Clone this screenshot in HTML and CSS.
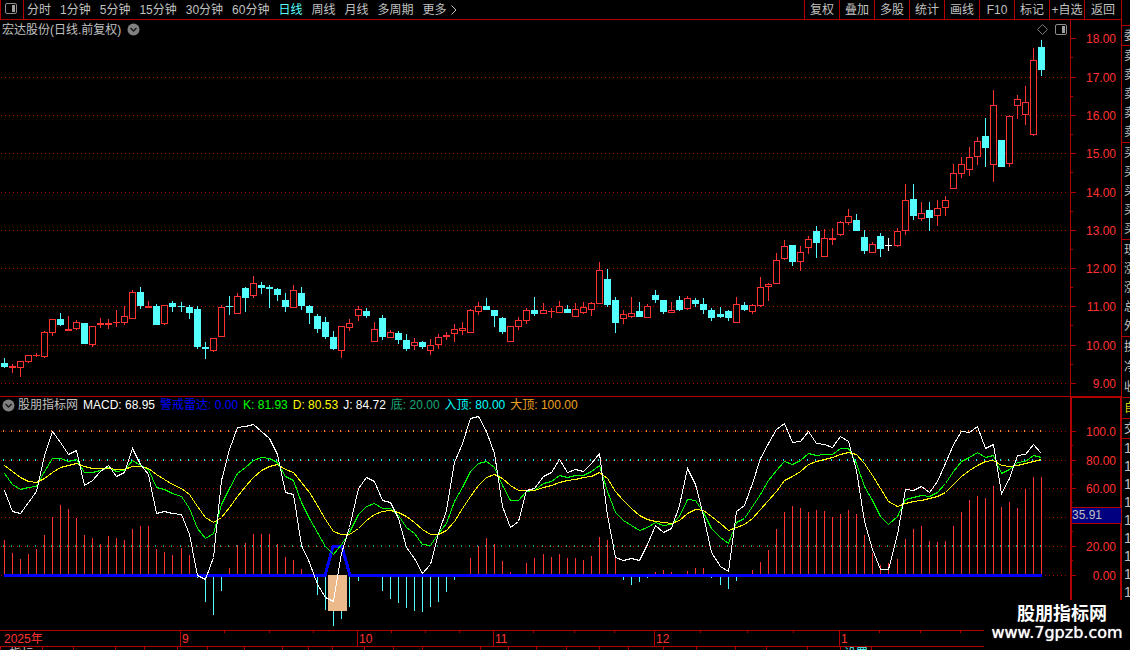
FILE: index.html
```html
<!doctype html>
<html lang="zh-CN">
    <head>
        <meta charset="UTF-8" />
        <meta name="viewport" content="width=device-width, initial-scale=1.0" />
        <title>宏达股份 - 日线</title>
        <link rel="stylesheet" href="styles.css">
    </head>
    <body>
        <div class="terminal">
            <main class="main">
                <nav class="toolbar">
                    <button class="panel-toggle" aria-label="侧栏">
                        <svg width="14" height="12" viewBox="0 0 14 12">
                            <rect x="0.5" y="0.5" width="11" height="10" rx="1.5" fill="none" stroke="#8c8c8c" />
                            <rect x="7" y="2" width="3" height="7" fill="#a0a0a0" />
                        </svg>
                    </button>
                    <div class="periods">
                        <button>分时</button>
                        <button>1分钟</button>
                        <button>5分钟</button>
                        <button>15分钟</button>
                        <button>30分钟</button>
                        <button>60分钟</button>
                        <button class="active">日线</button>
                        <button>周线</button>
                        <button>月线</button>
                        <button>多周期</button>
                        <button class="more">更多
                            <svg width="6" height="10" viewBox="0 0 6 10">
                                <path d="M0.5 0.5 L5 5 L0.5 9.5" fill="none" stroke="#c0c0c0" />
                            </svg>
                        </button>
                    </div>
                    <div class="tools">
                        <button>复权</button>
                        <button>叠加</button>
                        <button>多股</button>
                        <button>统计</button>
                        <button>画线</button>
                        <button>F10</button>
                        <button>标记</button>
                        <button>+自选</button>
                        <button>返回</button>
                    </div>
                </nav>

                <div class="workspace">
                    <div class="charts">
                        <section class="price">
                            <header class="price-title">
                                <span>宏达股份(日线.前复权)</span>
                                <button class="round" aria-label="展开">
                                    <svg width="13" height="13" viewBox="0 0 13 13">
                                        <circle cx="6.5" cy="6.5" r="6" fill="#808080" />
                                        <path d="M3.5 5 L6.5 8 L9.5 5" fill="none" stroke="#1a1a1a" stroke-width="1.5" />
                                    </svg>
                                </button>
                                <div class="corner">
                                    <svg width="11" height="11" viewBox="0 0 11 11">
                                        <path d="M5.5 0.5 L10.5 5.5 L5.5 10.5 L0.5 5.5 Z" fill="none" stroke="#7a7a7a" />
                                    </svg>
                                    <svg width="13" height="12" viewBox="0 0 13 12">
                                        <rect x="0.5" y="0.5" width="11" height="10" rx="1.5" fill="none" stroke="#8c8c8c" />
                                        <rect x="7" y="2" width="3" height="7" fill="#a0a0a0" />
                                    </svg>
                                </div>
                            </header>
                            <svg id="priceChart" class="plot plot-price" viewBox="0 39 1070 357" preserveAspectRatio="none"></svg>
                        </section>
                        <section class="indicator">
                            <header class="legend">
                                <button class="round" aria-label="指标菜单">
                                    <svg width="13" height="13" viewBox="0 0 13 13">
                                        <circle cx="6.5" cy="6.5" r="6" fill="#808080" />
                                        <path d="M3.5 5 L6.5 8 L9.5 5" fill="none" stroke="#1a1a1a" stroke-width="1.5" />
                                    </svg>
                                </button>
                                <span class="name">股朋指标网</span>
                                <span class="white">MACD: 68.95</span>
                                <span class="blue">警戒雷达: 0.00</span>
                                <span class="green">K: 81.93</span>
                                <span class="yellow">D: 80.53</span>
                                <span class="white">J: 84.72</span>
                                <span class="teal">底: 20.00</span>
                                <span class="cyan">入顶: 80.00</span>
                                <span class="orange">大顶: 100.00</span>
                            </header>
                            <svg id="kdjChart" class="plot plot-kdj" viewBox="0 414 1070 216" preserveAspectRatio="none"></svg>
                        </section>
                    </div>
                    <aside class="axes">
                        <svg id="priceAxis" class="axis" width="51" height="376" viewBox="1070 20 51 376"></svg>
                        <div class="kdj-axis">
                            <svg id="kdjAxis" class="axis" width="51" height="234" viewBox="1070 396 51 234"></svg>
                            <output class="cursor-value">35.91</output>
                        </div>
                    </aside>
                </div>

                <div class="dates">
                    <span>2025年</span>
                    <span>9</span>
                    <span>10</span>
                    <span>11</span>
                    <span>12</span>
                    <span>1</span>
                    <svg id="dateTicks" class="date-ticks" viewBox="0 0 1121 2" preserveAspectRatio="none"></svg>
                </div>
                <footer id="tabs" class="tabs"></footer>
            </main>

            <aside class="quote">
                <div class="q-head"></div>
                <div class="q-one"><span>委</span></div>
                <div class="q-five"><span>卖</span><span>卖</span><span>卖</span><span>卖</span><span>卖</span></div>
                <div class="q-five"><span>买</span><span>买</span><span>买</span><span>买</span><span>买</span></div>
                <div class="q-five"><span>现</span><span>涨</span><span>涨</span><span>总</span><span>外</span></div>
                <div class="q-three"><span>换</span><span>净</span><span>收</span></div>
                <div class="q-self"><span>自</span></div>
                <div class="q-one"><span>交</span></div>
                <div class="q-ticks"><span>1</span><span>1</span><span>1</span><span>1</span><span>1</span><span>1</span><span>1</span><span>1</span><span>1</span></div>
            </aside>
        </div>

        <div class="brand">
            <div class="brand-name">股朋指标网</div>
            <div class="brand-url">www.7gpzb.com</div>
        </div>
        <script src="chart.js"></script>
    </body>
</html>
```

FILE: styles.css
```css
body {
    background-color: black;
    margin: 0;
    height: 100vh;
    overflow: hidden;
    color: #c0c0c0;
    font-family: "Liberation Sans", "Noto Sans CJK SC", sans-serif;
    font-size: 12px;
    line-height: 16px;
}

button {
    padding: 0;
    border: none;
    background: none;
    color: inherit;
    font: inherit;
    white-space: nowrap;
    cursor: pointer;
}

svg {
    display: block;
}

.terminal {
    display: grid;
    grid-template-columns: minmax(0, 1fr) 9px;
}

/* top bar */
.toolbar {
    display: flex;
    height: 19px;
    border-bottom: 1px solid #b00000;
}

.panel-toggle {
    box-sizing: border-box;
    width: 24px;
    padding-left: 4px;
    padding-bottom: 2px;
    border-left: 1px solid #b00000;
    border-right: 1px solid #b00000;
}

.periods {
    display: flex;
    gap: 9px;
    padding-left: 3px;
    flex: 1;
}

.periods .active {
    color: #54ffff;
}

.more {
    display: flex;
    align-items: center;
    gap: 4px;
}

.tools {
    display: flex;
}

.tools button {
    box-sizing: border-box;
    width: 35px;
    border-left: 1px solid #b00000;
}

.tools button:last-child {
    width: 37px;
}

button:hover {
    color: white;
}

/* charts */
.workspace {
    display: grid;
    grid-template-columns: minmax(0, 1fr) 51px;
}

.plot {
    width: 100%;
    shape-rendering: crispEdges;
}

.plot-price {
    height: 357px;
}

.plot-kdj {
    height: 216px;
}

.price-title {
    display: flex;
    align-items: center;
    gap: 6px;
    height: 19px;
    padding-left: 2px;
}

.corner {
    display: flex;
    align-items: center;
    gap: 7px;
    margin-left: auto;
    padding-right: 2px;
}

.indicator {
    border-top: 1px solid #b00000;
}

.legend {
    display: flex;
    align-items: center;
    gap: 5px;
    height: 16px;
    padding-left: 2px;
    padding-bottom: 1px;
    white-space: nowrap;
}

.legend .name {
    margin-left: -2px;
}

.white {
    color: white;
}

.blue {
    color: #0000ff;
}

.green {
    color: #00ff00;
}

.yellow {
    color: #ffff00;
}

.teal {
    color: #18a878;
}

.cyan {
    color: #00ffff;
}

.orange {
    color: #f0a020;
}

.axis {
    shape-rendering: crispEdges;
    font-size: 12px;
    fill: #ff3232;
}

.kdj-axis {
    position: relative;
}

.cursor-value {
    position: absolute;
    top: 111px;
    left: 2px;
    right: 0;
    height: 15px;
    line-height: 15px;
    border-top: 1px solid #b00000;
    border-bottom: 1px solid #b00000;
    background-color: #000080;
}

/* dates */
.dates {
    position: relative;
    display: grid;
    grid-template-columns: 180fr 177fr 136fr 161fr 185fr 282fr;
    height: 15px;
    border-top: 1px solid #b00000;
    border-bottom: 1px solid #b00000;
    color: #ff3232;
}

.dates span {
    padding-left: 1px;
    border-left: 1px solid #b00000;
}

.dates span:first-child {
    padding-left: 4px;
    border-left: none;
}

.date-ticks {
    position: absolute;
    top: 0;
    left: 0;
    width: 100%;
    height: 2px;
}

.tabs {
    display: flex;
    height: 14px;
    line-height: 14px;
}

.tabs button {
    box-sizing: border-box;
    border-left: 1px solid #b00000;
}

.tabs .on {
    color: #54ffff;
}

/* quote column, mostly off screen */
.quote {
    overflow: hidden;
    border-left: 1px solid #b00000;
}

.quote div {
    display: flex;
    flex-direction: column;
    justify-content: space-around;
    box-sizing: border-box;
    padding-left: 2px;
    border-bottom: 1px solid #b00000;
}

.quote span {
    width: 14px;
}

.quote .q-head {
    height: 26px;
}

.quote .q-one {
    height: 20px;
}

.quote .q-five {
    height: 97px;
}

.quote .q-three {
    height: 61px;
}

.quote .q-self {
    height: 21px;
    color: #d0d000;
}

.quote .q-ticks {
    height: 162px;
    border-bottom: none;
    font-size: 14px;
}

/* site mark */
.brand {
    position: absolute;
    top: 600px;
    right: 0;
    width: 146px;
    height: 50px;
    background-color: black;
    color: white;
    text-align: center;
}

.brand-name {
    padding-left: 10px;
    font-size: 18px;
    font-weight: bold;
    line-height: 28px;
}

.brand-url {
    font-family: "DejaVu Sans", sans-serif;
    font-size: 16px;
    line-height: 10px;
    text-shadow: 0 0 1px white;
}
```

FILE: chart.js
```js
// one candle per entry: kind high top bottom low (rows)
// d = down, u = up, f = flat
const candles = `
d 358 363 366 367|u 364 366 367 372|u 361 361 367 376|u 355 355 361 362|u 353 355 355 356
u 331 332 356 357|u 319 319 332 335|d 313 319 324 325|u 316 329 330 330|u 320 322 328 329
d 323 323 343 343|u 326 326 344 346|u 318 323 324 327|u 319 323 324 328|u 310 322 322 326
u 306 316 322 324|u 290 292 318 318|d 287 292 305 308|u 301 306 307 307|d 304 306 324 324
u 305 305 323 324|d 301 303 306 311|d 302 306 306 311|d 305 307 312 318|d 306 309 346 348
d 342 347 348 358|u 338 338 350 351|u 305 307 336 336|d 296 306 306 314|u 293 296 313 313
d 287 288 297 311|u 276 283 295 297|d 282 285 287 293|d 285 287 288 307|d 288 289 294 300
d 293 300 306 311|u 285 290 307 307|d 287 293 305 309|d 305 306 312 323|d 314 316 328 332
d 317 322 336 338|d 331 337 348 349|u 326 326 350 357|u 319 323 327 330|u 306 309 315 320
d 308 311 315 317|u 322 329 341 341|d 315 318 336 339|u 330 332 337 337|d 331 333 339 343
d 334 340 348 350|u 338 342 345 349|d 341 342 346 348|u 339 345 350 354|u 334 337 344 348
u 332 335 336 339|u 324 329 333 341|u 322 328 330 334|u 309 310 332 332|u 302 306 311 314
d 298 306 309 309|d 310 310 315 326|d 317 318 331 333|u 326 326 341 341|u 317 320 326 329
u 308 310 320 323|d 297 310 313 315|u 303 310 313 313|u 308 311 311 317|u 301 306 312 312
d 305 309 312 312|u 303 309 316 316|u 302 307 312 313|u 302 303 309 315|u 262 270 303 303
d 269 279 304 306|d 297 300 322 332|u 310 314 318 323|u 297 313 316 317|d 302 311 316 316
u 304 306 317 317|d 290 295 299 302|d 300 300 311 313|u 302 310 312 312|d 296 300 309 310
u 296 298 308 309|d 298 300 303 306|d 298 304 309 313|d 308 310 317 320|d 307 314 316 317
d 310 311 317 320|u 297 304 322 322|d 302 305 309 310|u 304 305 311 313|u 277 287 305 306
u 283 284 286 300|u 253 260 283 283|u 240 246 258 259|d 245 245 261 265|u 246 252 261 270
u 236 239 247 253|d 226 231 242 257|u 229 238 256 256|u 228 238 239 244|u 221 222 234 235
u 209 216 222 224|d 214 220 230 230|d 230 237 250 253|u 242 244 252 252|d 233 236 248 256
f 238 245 245 250|u 228 231 245 246|u 184 200 230 234|d 184 199 215 219|u 202 213 218 220
d 202 210 217 230|u 200 208 215 225|u 196 200 207 215|u 164 173 188 188|u 157 164 173 177
u 147 157 169 175|u 137 141 156 164|d 118 136 147 166|u 90 105 164 181|d 140 140 166 166
u 115 116 163 166|u 95 99 105 118|u 86 102 114 124|u 48 60 134 135|d 40 47 69 75`
    .trim().split(/[|\n]/).map((c) => c.split(" "));

// indicator series, three steps to a row, counted from row 395
const k = [
    234, 268, 283, 277, 272, 228, 190, 190, 199, 192, 232, 232, 224, 217, 229, 226, 196, 210, 222, 277,
    283, 294, 304, 339, 400, 430, 414, 326, 280, 234, 215, 195, 187, 188, 200, 244, 255, 320, 368, 412,
    452, 478, 447, 410, 357, 332, 323, 338, 338, 360, 395, 414, 448, 449, 415, 384, 318, 275, 228, 203,
    199, 215, 270, 314, 316, 287, 284, 265, 259, 239, 247, 241, 241, 228, 211, 288, 352, 376, 391, 406,
    397, 380, 391, 387, 362, 311, 316, 352, 400, 427, 443, 380, 369, 333, 296, 256, 226, 199, 208, 196,
    175, 181, 178, 178, 160, 160, 205, 272, 315, 363, 387, 362, 313, 307, 301, 304, 290, 263, 228, 199,
    187, 170, 187, 179, 234, 223, 201, 197, 181, 187,
];
const d = [
    211, 229, 247, 259, 262, 249, 230, 217, 211, 205, 214, 220, 220, 220, 223, 223, 214, 214, 218, 236,
    253, 267, 280, 298, 334, 365, 381, 366, 337, 303, 272, 247, 226, 213, 208, 222, 232, 262, 292, 330,
    372, 408, 418, 416, 398, 374, 357, 349, 346, 350, 362, 382, 403, 418, 418, 405, 378, 340, 302, 270,
    247, 238, 250, 271, 286, 286, 286, 277, 271, 260, 256, 253, 247, 242, 232, 250, 287, 316, 340, 360,
    372, 377, 382, 385, 376, 354, 343, 346, 363, 385, 406, 396, 388, 370, 343, 315, 287, 256, 242, 227,
    208, 199, 193, 187, 178, 172, 178, 204, 240, 280, 319, 333, 325, 319, 314, 310, 303, 290, 268, 243,
    226, 209, 199, 195, 209, 214, 210, 205, 198, 193,
];
const j = [
    286, 348, 355, 320, 288, 180, 108, 140, 178, 164, 270, 255, 228, 211, 243, 232, 158, 208, 236, 354,
    349, 355, 356, 418, 540, 553, 486, 254, 162, 95, 94, 88, 108, 130, 178, 290, 298, 450, 500, 568,
    606, 619, 475, 395, 278, 247, 257, 316, 321, 370, 456, 490, 535, 507, 415, 345, 200, 145, 70, 64,
    108, 175, 332, 397, 377, 286, 280, 242, 232, 193, 232, 223, 229, 204, 173, 360, 486, 496, 490, 495,
    447, 389, 411, 398, 330, 220, 268, 360, 472, 512, 528, 347, 331, 265, 190, 145, 103, 83, 142, 139,
    109, 144, 148, 157, 122, 137, 225, 378, 462, 523, 523, 418, 283, 286, 274, 290, 258, 205, 148, 109,
    112, 94, 160, 146, 295, 248, 181, 178, 148, 173,
];
// MACD bars, 0 = no bar
const macd = [
    435, 474, 492, 477, 462, 420, 366, 330, 342, 369, 420, 429, 447, 423, 429, 435, 402, 393, 393, 462,
    471, 480, 459, 480, 549, 621, 660, 588, 519, 450, 444, 417, 417, 417, 447, 486, 495, 522, 0, 600,
    645, 693, 672, 636, 558, 0, 0, 588, 612, 624, 639, 648, 651, 636, 621, 591, 555, 0, 489, 453,
    429, 447, 498, 531, 0, 504, 489, 477, 486, 477, 489, 489, 495, 483, 426, 435, 486, 555, 570, 561,
    549, 531, 525, 531, 0, 528, 519, 519, 549, 570, 582, 558, 0, 525, 501, 465, 402, 351, 333, 339,
    351, 345, 348, 366, 357, 345, 357, 420, 474, 510, 504, 492, 432, 402, 393, 438, 441, 438, 393, 351,
    315, 303, 309, 273, 336, 321, 339, 282, 246, 246,
];

const red = "#ff3232";
const line = "#b00000";
const colors = { u: red, d: "#54ffff", f: "#ffffff" };

function barX(i) {
    return 4 + 8 * i + Math.floor((i + 0.7) / 22.3);
}

function row(v) {
    return Math.round(395 + v / 3);
}

function box(x, y, w, h, fill) {
    return `<rect x="${x}" y="${y}" width="${w}" height="${h}" fill="${fill}"/>`;
}

function grid(rows) {
    return rows
        .map((y) => `<path d="M1 ${y + 0.5}H1069" stroke="${line}" stroke-dasharray="1 3"/>`)
        .join("");
}

function drawPrice() {
    let out = grid([77, 115, 153, 192, 230, 268, 306, 345, 383]);
    candles.forEach(([kind, ...rows], i) => {
        const [high, top, bottom, low] = rows.map(Number);
        const x = barX(i);
        const c = colors[kind];
        out += box(x, high, 1, top - high, c);
        out += box(x, bottom, 1, low - bottom + 1, c);
        if (kind === "u" && bottom - top > 1) {
            out += `<rect x="${x - 2.5}" y="${top + 0.5}" width="6" height="${bottom - top}" fill="black" stroke="${c}"/>`;
        } else {
            out += box(x - 3, top, 7, bottom - top + 1, c);
        }
    });
    document.getElementById("priceChart").innerHTML = out;
}

function curve(values, color) {
    const points = values.map((v, i) => `${barX(i) + 0.5},${row(v) + 0.5}`).join(" ");
    return `<polyline points="${points}" fill="none" stroke="${color}"/>`;
}

function drawKdj() {
    let out = grid([431, 460, 488, 517, 546, 575]);
    macd.forEach((v, i) => {
        const x = barX(i);
        if (v > 541) {
            out += box(x, 576, 1, row(v) - 576, colors.d);
        } else if (v) {
            out += box(x, row(v), 1, 575 - row(v), red);
        }
        out += box(x - 1, 430, 1, 2, "#f0a020");
        out += box(x - 1, 459, 1, 2, "#00ffff");
        out += box(x - 1, 545, 1, 2, "#18a878");
    });
    out += `<path d="M4 575.5H325L333 546.5H342L350 575.5H1042" fill="none" stroke="#0000ff" stroke-width="3"/>`;
    out += box(328, 575, 19, 36, "#ecb98b");
    out += curve(k, "#00ff00") + curve(d, "#ffff00") + curve(j, "#ffffff");
    document.getElementById("kdjChart").innerHTML = out;
}

function drawAxes() {
    let out = box(1070, 20, 1, 376, line);
    [38, 77, 115, 153, 192, 230, 268, 306, 345, 383].forEach((y, i) => {
        out += box(1070, y, 6, 1, line);
        if (i < 9) out += box(1070, y + 19, 3, 1, line);
        out += `<text x="1116" y="${y + 5}" text-anchor="end">${18 - i}.00</text>`;
    });
    document.getElementById("priceAxis").innerHTML = out;

    out = box(1070, 396, 51, 2, line) + box(1070, 396, 2, 234, line) + box(1120, 396, 1, 234, line);
    const labels = ["100.0", "80.00", "60.00", "", "20.00", "0.00"];
    [431, 460, 488, 517, 546, 575].forEach((y, i) => {
        out += box(1071, y, 5, 1, line);
        if (i < 5) out += box(1071, y + 14, 2, 1, line);
        out += `<text x="1116" y="${y + 5}" text-anchor="end">${labels[i]}</text>`;
    });
    document.getElementById("kdjAxis").innerHTML = out;
}

function drawDates() {
    document.getElementById("dateTicks").innerHTML =
        [224, 269, 313, 391, 425, 459, 533, 574, 614, 700, 747, 793, 879, 920, 960]
            .map((x) => box(x, 0, 1, 2, line))
            .join("");

    const edges = [
        0, 42, 73, 115, 144, 177, 207, 244, 282, 308, 332, 364, 393, 422, 480, 508,
        536, 566, 599, 628, 663, 696, 735, 766, 807, 840, 871, 984,
    ];
    const names = { 0: "指标", 25: "设置" };
    document.getElementById("tabs").innerHTML = edges
        .slice(0, -1)
        .map((x, i) => `<button class="${i === 25 ? "on" : ""}" style="width: ${edges[i + 1] - x}px">${names[i] || ""}</button>`)
        .join("");
}

drawPrice();
drawKdj();
drawAxes();
drawDates();
```
